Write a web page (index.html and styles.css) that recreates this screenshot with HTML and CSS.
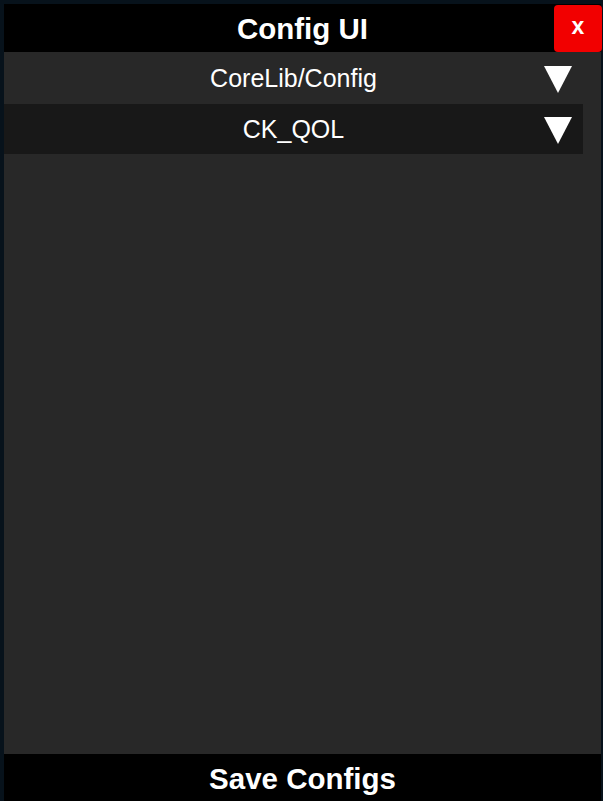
FILE: index.html
```html
<!DOCTYPE html>
<html>
<head>
<meta charset="utf-8">
<link rel="stylesheet" href="styles.css">
</head>
<body>
<div class="window">
  <div class="titlebar">
    <span class="title">Config UI</span>
    <button class="close">x</button>
  </div>
  <div class="rows">
    <div class="row row-light">
      <span></span>
      <span class="label">CoreLib/Config</span>
      <svg class="arrow" width="28" height="27" viewBox="0 0 28 27"><polygon points="0,0 28,0 14,27" fill="#fff"/></svg>
    </div>
    <div class="row row-dark">
      <span></span>
      <span class="label">CK_QOL</span>
      <svg class="arrow" width="28" height="27" viewBox="0 0 28 27"><polygon points="0,0 28,0 14,27" fill="#fff"/></svg>
    </div>
  </div>
  <div class="footer">Save Configs</div>
</div>
</body>
</html>
```
FILE: styles.css
```css
html, body {
  margin: 0;
  padding: 0;
  height: 100%;
  overflow: hidden;
}
body {
  background: #07121b;
  font-family: "Liberation Sans", Arial, sans-serif;
  color: #fff;
}
.window {
  margin: 4px 0 0 4px;
  width: 597px;
  height: 800px;
  background: #282828;
  display: flex;
  flex-direction: column;
}
.titlebar {
  position: relative;
  height: 48px;
  background: #000;
  display: flex;
  align-items: center;
  justify-content: center;
  flex: none;
}
.title {
  font-weight: bold;
  font-size: 29.5px;
  line-height: 1;
  margin-top: 2px;
}
.close {
  position: absolute;
  top: 1px;
  right: -1px;
  width: 48px;
  height: 47px;
  border: 0;
  border-radius: 4px;
  background: #f20000;
  color: #fff;
  font-family: "Liberation Sans", Arial, sans-serif;
  font-weight: bold;
  font-size: 23px;
  line-height: 1;
  padding: 0 0 4px 0;
  cursor: pointer;
}
.rows {
  width: 579px;
  display: flex;
  flex-direction: column;
}
.row {
  display: grid;
  grid-template-columns: 1fr auto 1fr;
  align-items: center;
}
.row-light {
  height: 52px;
  background: #282828;
}
.row-dark {
  height: 50px;
  background: #181818;
}
.label {
  font-size: 25px;
  line-height: 1;
  color: #fff;
}
.arrow {
  justify-self: end;
  margin-right: 11px;
  margin-top: 2px;
  display: block;
}
.footer {
  margin-top: auto;
  height: 50px;
  flex: none;
  background: #000;
  font-weight: bold;
  font-size: 29.5px;
  line-height: 50px;
  text-align: center;
}
```
